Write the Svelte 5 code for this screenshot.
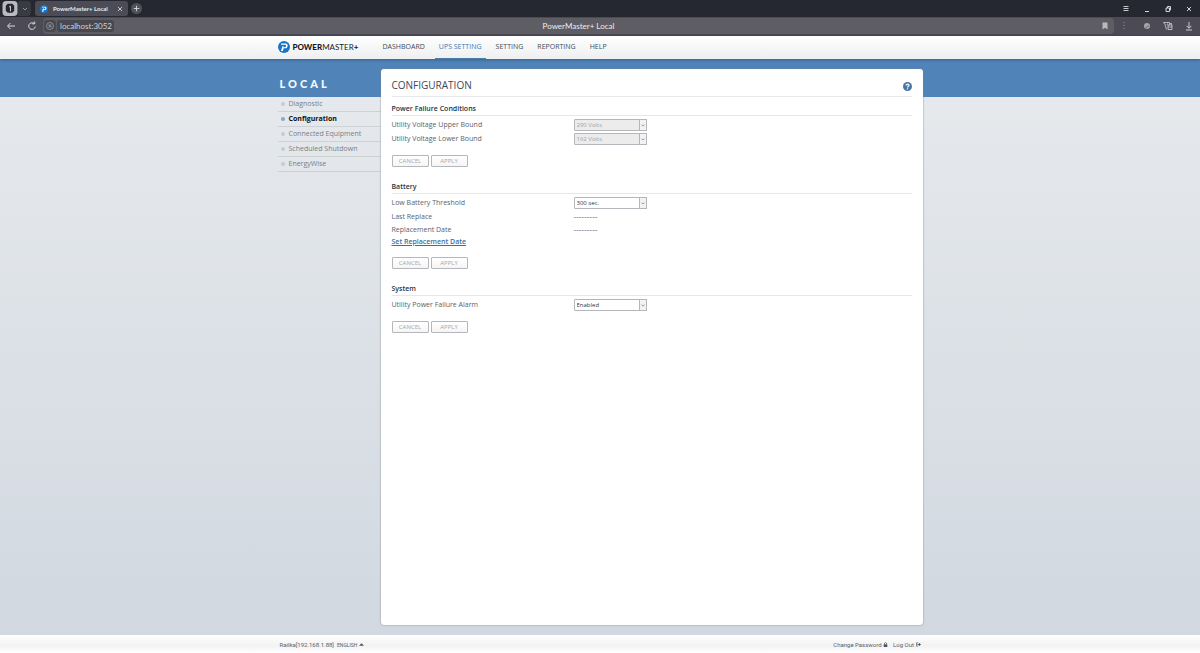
<script>
  const nav = ['DASHBOARD', 'UPS SETTING', 'SETTING', 'REPORTING', 'HELP'];
  const menu = ['Diagnostic', 'Configuration', 'Connected Equipment', 'Scheduled Shutdown', 'EnergyWise'];
  const sections = [
    {
      title: 'Power Failure Conditions',
      rows: [
        { id: 'upper', label: 'Utility Voltage Upper Bound', value: '290 Volts', disabled: true },
        { id: 'lower', label: 'Utility Voltage Lower Bound', value: '162 Volts', disabled: true }
      ]
    },
    {
      title: 'Battery',
      rows: [
        { id: 'threshold', label: 'Low Battery Threshold', value: '300 sec.' },
        { label: 'Last Replace', text: '---------' },
        { label: 'Replacement Date', text: '---------' },
        { link: 'Set Replacement Date' }
      ]
    },
    {
      title: 'System',
      rows: [{ id: 'alarm', label: 'Utility Power Failure Alarm', value: 'Enabled' }]
    }
  ];
</script>

{#snippet mark()}
  <svg class="mark" viewBox="0 0 22 22" aria-hidden="true">
    <circle cx="11" cy="11" r="11" fill="#1974c8" />
    <path d="M6 4.500h8c5.500 0 4.500 9-.5 9h-3.200L9 18.500H5.500L8 9.500h2.500l-.7 2h3c2.500 0 3-4.500.5-4.500H5.200z" fill="#fff" />
  </svg>
{/snippet}

<div class="page">
  <div class="tabs">
    <button class="workspace" aria-label="Workspace">
      <svg viewBox="0 0 16 16"><rect width="16" height="16" rx="4" fill="#babac0" /><path d="M5.500 3h5l2 2v5.500l-2 2h-5l-2-2V5z" fill="#26282f" /><path d="M7 6.500l1.500-1V11" stroke="#ddd" fill="none" /></svg>
    </button>
    <button class="chev" aria-label="Workspace list">
      <svg viewBox="0 0 8 8"><path d="M2 3l2 2 2-2" stroke="#a9abb1" stroke-width=".8" fill="none" /></svg>
    </button>
    <div class="tab">
      {@render mark()}
      <span>PowerMaster+ Local</span>
      <button aria-label="Close tab"><svg viewBox="0 0 8 8"><path d="M2 2l4 4M6 2L2 6" stroke="#d4d4d9" stroke-width=".9" fill="none" /></svg></button>
    </div>
    <button class="plus" aria-label="New tab"><svg viewBox="0 0 12 12"><circle cx="6" cy="6" r="6" fill="#50515a" /><path d="M3 6h6M6 3v6" stroke="#d4d4d9" /></svg></button>
    <div class="window">
      <button aria-label="Menu"><svg viewBox="0 0 8 8"><path d="M1.500 1.500h5M1.500 3.500h5M1.500 5.500h5" stroke="#c5c6cb" /></svg></button>
      <button aria-label="Minimize"><svg viewBox="0 0 8 8"><path d="M2 6.500h4" stroke="#d5d6da" /></svg></button>
      <button aria-label="Restore"><svg viewBox="0 0 8 8"><path d="M2 3h3.500v3.500H2zM3.500 3V1.500H6.500V5H5.500" stroke="#e5e6ea" stroke-width=".9" fill="none" /></svg></button>
      <button aria-label="Close"><svg viewBox="0 0 8 8"><path d="M2 2l4 4M6 2L2 6" stroke="#d5d6da" fill="none" /></svg></button>
    </div>
  </div>

  <div class="toolbar">
    <button aria-label="Back"><svg viewBox="0 0 10 10"><path d="M9 5H2M4.500 2L1.500 5l3 3" stroke="#dadadf" fill="none" /></svg></button>
    <button aria-label="Reload"><svg viewBox="0 0 10 10"><path d="M8.300 5.500A3.300 3.300 0 1 1 7 2.400M5.200 2.800h2.500V.500" stroke="#dadadf" fill="none" /></svg></button>
    <div class="address">
      <span class="site"><svg viewBox="0 0 10 10"><circle cx="5" cy="5" r="3.500" stroke="#999aa1" stroke-width=".8" fill="none" /><path d="M3 4l4 2M5 3v4M3.500 6.500L6.500 3.500" stroke="#999aa1" stroke-width=".7" /></svg></span>
      <span class="host">localhost:3052</span>
      <span class="doc">PowerMaster+ Local</span>
      <button aria-label="Bookmark"><svg viewBox="0 0 10 10"><path d="M2.500 1.500h5v7L5 6.700 2.500 8.500z" fill="#b9b9be" /></svg></button>
    </div>
    <div class="tools">
      <svg class="dots" viewBox="0 0 10 10"><path d="M5 1v9" stroke="#94949d" stroke-dasharray="1 2" /></svg>
      <button aria-label="Extension"><svg viewBox="0 0 10 10"><circle cx="5" cy="5" r="3" fill="#a5a5ab" /><path d="M3.500 7L7 4.500" stroke="#55555f" stroke-width=".8" /></svg></button>
      <button aria-label="Collections"><svg viewBox="0 0 10 10"><path d="M3.500 8.500L2 3.500.500 1.500h6v1M4 4l.5-1.500M5 4h4v4.500H5zM5 6h4M6.500 4V2.500h2V4" stroke="#d0d0d6" stroke-width=".8" fill="none" /></svg></button>
      <button aria-label="Downloads"><svg viewBox="0 0 10 10"><path d="M5 1v6M2.500 4.800L5 7.300l2.500-2.500M2 9h6" stroke="#dadadf" stroke-width=".9" fill="none" /></svg></button>
    </div>
  </div>

  <header>
    <div class="wrap head">
      <a class="brand" href="#home">{@render mark()}<span><b>POWER</b>MASTER<b>+</b></span></a>
      <nav aria-label="Main">
        {#each nav as item}
          <a href="#{item}" class:active={item === 'UPS SETTING'}>{item}</a>
        {/each}
      </nav>
    </div>
  </header>

  <main>
    <div class="wrap body">
      <aside>
        <h2 class="device">LOCAL</h2>
        <ul>
          {#each menu as item}
            <li><a href="#{item}" class:current={item === 'Configuration'}>{item}</a></li>
          {/each}
        </ul>
      </aside>
      <div class="panel">
        <div class="title">
          <h1>CONFIGURATION</h1>
          <button aria-label="Help"><svg viewBox="0 0 18 18"><circle cx="9" cy="9" r="9" fill="#4677a9" /><path d="M6 7c0-4 6.500-3.500 6 0-.2 1.700-3 1.700-3 4" stroke="#fff" stroke-width="2.400" fill="none" /><path d="M7.800 12.500h2.400v2.300H7.800z" fill="#fff" /></svg></button>
        </div>
        {#each sections as section}
          <section>
            <h2>{section.title}</h2>
            <div class="rows">
              {#each section.rows as row}
                {#if row.link}
                  <a class="link" href="#replacement">{row.link}</a>
                {:else}
                  <div class="row">
                    {#if row.text}
                      <span>{row.label}</span><span class="blank">{row.text}</span>
                    {:else}
                      <label for={row.id}>{row.label}</label>
                      <div class="select">
                        <select id={row.id} disabled={row.disabled}><option>{row.value}</option></select>
                        <svg viewBox="0 0 8 12" aria-hidden="true"><path d="M2 5.500l2 2 2-2" stroke="#777" fill="none" /></svg>
                      </div>
                    {/if}
                  </div>
                {/if}
              {/each}
            </div>
            <div class="actions"><button disabled>CANCEL</button><button disabled>APPLY</button></div>
          </section>
        {/each}
      </div>
    </div>
  </main>

  <footer>
    <div class="wrap foot">
      <span>Railka[192.168.1.88]</span>
      <button class="lang">ENGLISH <svg viewBox="0 0 6 6"><path d="M0 4.500L3 1.500l3 3z" fill="#4c5560" /></svg></button>
      <a class="push" href="#password">Change Password <svg viewBox="0 0 6 6"><path d="M.800 2.800h4.400V6H.800z" fill="#4c5560" /><path d="M1.800 3V1.500Q3-.500 4.200 1.500V3" stroke="#4c5560" stroke-width=".9" fill="none" /></svg></a>
      <a href="#logout">Log Out <svg viewBox="0 0 6 6"><path d="M2.500 1H.600v4h1.900" stroke="#4c5560" stroke-width=".8" fill="none" /><path d="M1.800 2.300h1.700V1L6 3 3.500 5V3.700H1.800z" fill="#4c5560" /></svg></a>
    </div>
  </footer>
</div>

<style>
  :global(body) { margin: 0; }
  .page {
    min-height: 100vh;
    display: flex;
    flex-direction: column;
    font: 7px/12px "Open Sans", "Noto Sans", sans-serif;
    color: #59626d;
  }
  .page *, .page { box-sizing: border-box; }
  button { font: inherit; color: inherit; padding: 0; border: 0; background: none; }
  a { color: inherit; text-decoration: none; }
  svg { display: block; flex: none; }
  h1, h2, ul { margin: 0; padding: 0; }
  .mark { width: 12px; height: 12px; }

  .tabs { height: 17px; display: flex; align-items: center; background: #252831; color: #e8e8ec; }
  .workspace { margin-left: 2px; }
  .workspace svg { width: 16px; height: 15px; }
  .chev { width: 13px; height: 15px; margin-right: 4px; padding: 0 3px; background: #393b44; border-radius: 0 4px 4px 0; }
  .chev svg { width: 8px; height: 8px; }
  .tab { width: 93px; height: 15px; padding: 0 4px 0 5px; display: flex; align-items: center; background: #4b4c56; border-radius: 3px; font-family: Lato, sans-serif; font-size: 6px; font-weight: bold; }
  .tab .mark { width: 8px; height: 8px; margin-right: 5px; }
  .tab span { white-space: nowrap; }
  .tab button { margin-left: auto; }
  .tab button svg { width: 8px; height: 8px; }
  .plus { margin-left: 3px; }
  .plus svg { width: 11px; height: 11px; }
  .window { margin-left: auto; margin-right: 7px; display: flex; gap: 13px; }
  .window svg { width: 8px; height: 8px; }

  .toolbar { height: 19px; display: flex; align-items: center; gap: 11px; padding: 0 6px; background: #4b4a55; border-bottom: 1px solid #44434d; font-family: Lato, sans-serif; color: #d2d2d7; }
  .toolbar svg { width: 10px; height: 10px; }
  .address { flex: 1; height: 16px; margin-left: -5px; position: relative; display: flex; align-items: center; gap: 1px; padding: 0 4px 0 1px; background: #5e5d63; border-radius: 4px; font-size: 8px; }
  .site, .host { height: 12px; background: #484851; border-radius: 3px; }
  .site { padding: 1px; }
  .host { padding: 0 2px 0 3px; }
  .doc { position: absolute; left: 0; right: 0; text-align: center; color: #eeeef1; pointer-events: none; }
  .address button { margin-left: auto; }
  .tools { display: flex; gap: 11px; }
  .tools .dots { margin: 0 2px 0 -6px; }

  .wrap { width: 645px; max-width: 100%; margin: 0 auto; display: flex; }
  header { height: 23px; background: linear-gradient(#fff, #eeeff0); position: relative; box-shadow: 0 1px 3px #31597fcc; }
  .head { height: 23px; align-items: stretch; }
  .brand { width: 101px; padding-bottom: 1px; display: flex; align-items: center; gap: 3px; font: 8px/12px Lato, sans-serif; color: #17191c; }
  .brand b { font-weight: 900; }
  nav { display: flex; gap: 6px; }
  nav a { padding: 5px 4px 0; color: #414b56; border-bottom: 1px solid transparent; white-space: nowrap; }
  nav .active { color: #3e78b2; border-color: #4b7cac; }

  main { flex: 1; display: flex; background: linear-gradient(#5084b9 38px, transparent 38px), linear-gradient(#e7eaed, #d1d8e0); }
  .body { align-items: stretch; }
  aside { width: 103px; color: #76808c; }
  .device { height: 38px; padding: 17px 2px 0; font: 900 11px/16px Lato, sans-serif; letter-spacing: 3px; color: #f5f9ff; }
  ul { list-style: none; }
  li { height: 15px; border-bottom: 1px solid #cdd2d7; }
  li a { display: flex; align-items: center; gap: 4px; padding-left: 3px; line-height: 14px; white-space: nowrap; }
  li a::before { content: ''; width: 4px; height: 4px; border-radius: 50%; background: #c5cbd3; }
  li .current { font-weight: bold; color: #111; }
  li .current::before { background: #88a7ca; }

  .panel { flex: 1; margin: 10px 0; padding: 0 11px; background: #fff; border-radius: 3px; box-shadow: 0 0 2px #7b838c; }
  .title { height: 28px; display: flex; align-items: center; justify-content: space-between; padding-top: 7px; border-bottom: 1px solid #e7e9eb; }
  h1 { font-size: 10px; line-height: 16px; font-weight: 500; color: #3b4854; margin-bottom: 3px; }
  .title svg { width: 9px; height: 9px; }
  section { margin-bottom: 8px; }
  section h2 { height: 19px; padding-top: 6px; font-size: 7px; line-height: 12px; font-weight: 600; color: #263442; border-bottom: 1px solid #e5e7e9; }
  .rows { padding: 2px 0 9px; }
  .row { min-height: 13px; display: grid; grid-template-columns: 182px 1fr; align-items: center; }
  .row:has(select) { min-height: 14px; }
  .link { display: block; width: max-content; color: #3c70a5; font-weight: 600; text-decoration: underline; }
  .blank { font-family: "Liberation Sans", sans-serif; font-size: 8px; }
  .select { position: relative; width: 73px; height: 12px; }
  select { appearance: none; width: 100%; height: 12px; display: block; padding: 0 10px 0 2px; border: 1px solid #b3b7bb; border-radius: 1px; background: #fff; font: 6px/10px "Open Sans", sans-serif; color: #30363c; }
  select:disabled { background: #ececec; color: #a0a0a0; opacity: 1; }
  .select svg { position: absolute; right: 0; top: 0; width: 8px; height: 12px; border: 1px solid #b3b7bb; background: #f3f3f3; pointer-events: none; }
  .actions { display: flex; gap: 2px; }
  .actions button { width: 37px; height: 12px; border: 1px solid #b4b8bc; border-radius: 1px; background: linear-gradient(#fff, #f5f5f5); font-size: 6px; line-height: 10px; color: #a5a8ac; }

  footer { height: 18px; background: linear-gradient(#fff, #f2f2f3 60%, #fff); }
  .foot { height: 18px; align-items: center; gap: 3px; padding: 1px 2px 0; font: 6px/12px Roboto, sans-serif; white-space: nowrap; }
  .foot svg { display: inline-block; width: 5px; height: 5px; }
  .lang { font-size: 5px; }
  .push { margin-left: auto; margin-right: 2px; }
</style>
